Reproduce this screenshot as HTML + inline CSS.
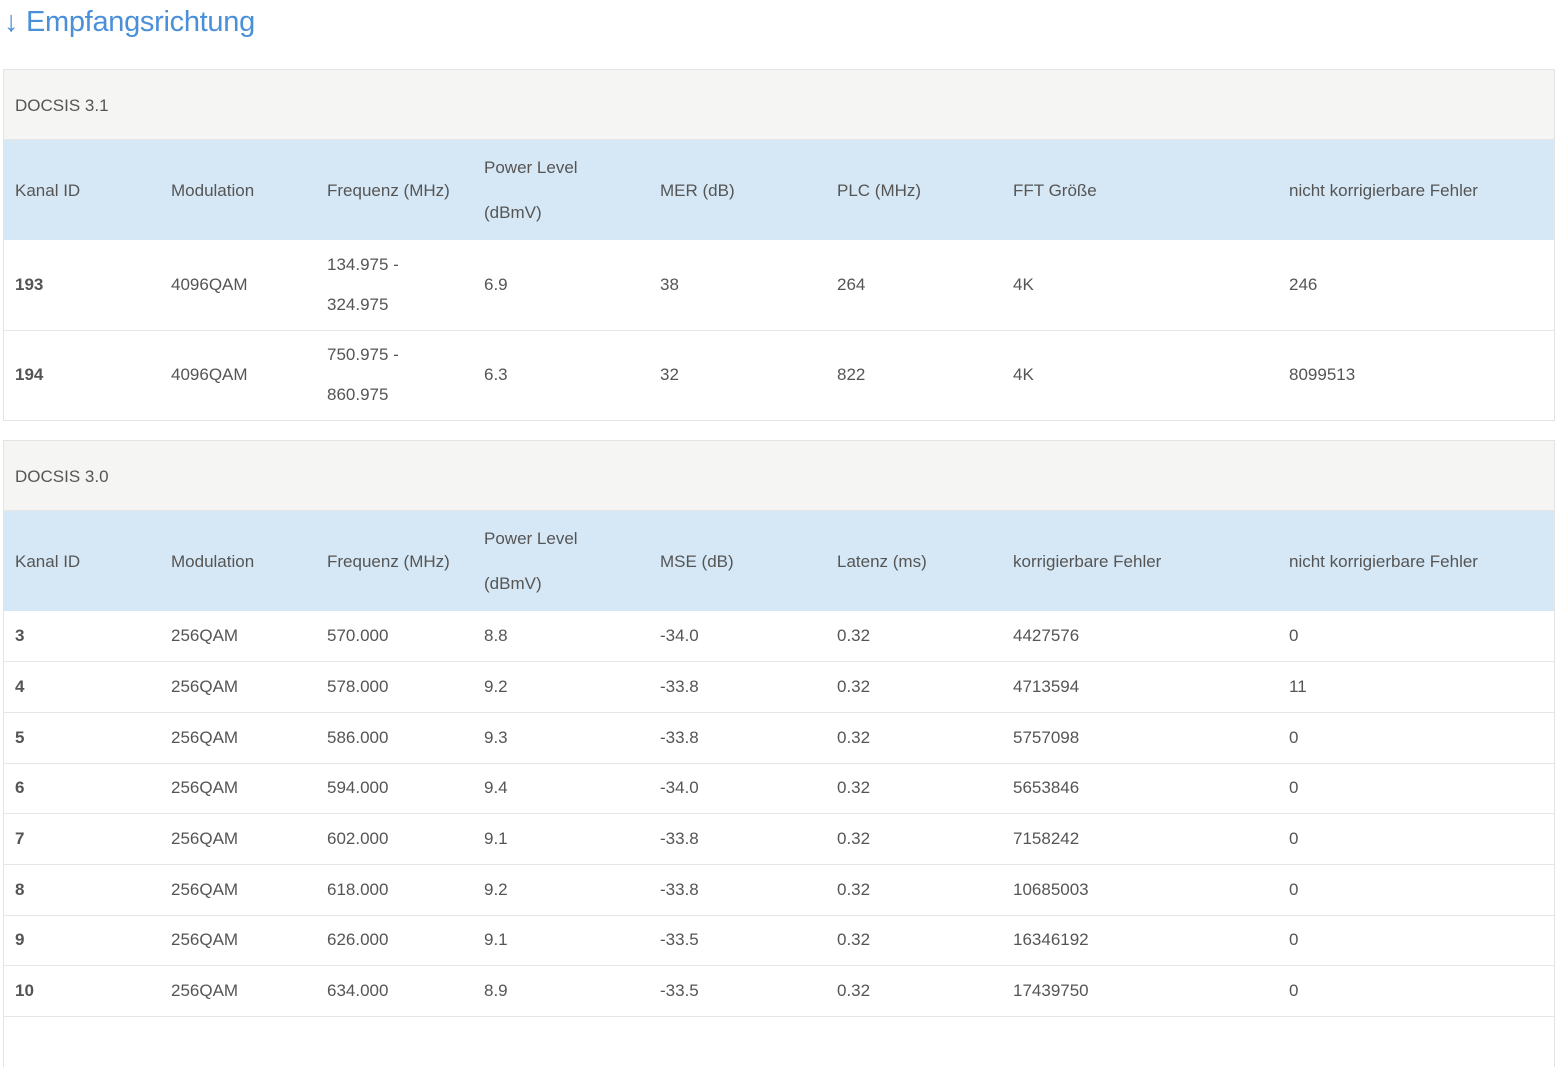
<!DOCTYPE html>
<html><head><meta charset="utf-8"><style>
html,body{margin:0;height:1023px;overflow:hidden}
body{background:#fff;font-family:"Liberation Sans",sans-serif;color:#555;font-size:17px;}
h2{margin:0;position:absolute;left:4px;top:6px;font-weight:normal;font-size:29px;color:#4a90d9;letter-spacing:-0.3px}
.panel{position:absolute;left:3px;width:1550px;border:1px solid #e3e3e3;}
.ph{height:69px;background:#f5f5f4;border-bottom:1px solid #e6e6e6;padding-left:11px;line-height:72px;font-size:17px;color:#555}
table{border-collapse:collapse;table-layout:fixed;width:1550px}
td,th{padding:0 0 0 11px;text-align:left;font-weight:normal;vertical-align:middle;overflow:hidden;white-space:nowrap}
thead tr{background:#d6e8f6}
th{line-height:45px}
.p1 tbody tr{height:90px;border-top:1px solid #e6e6e6}
.p1 thead tr,.p2 thead tr{height:100px}
.p1 td{line-height:40px}
.p2 tbody tr{height:50.7px;border-top:1px solid #e6e6e6}
td:first-child{font-weight:bold}
</style></head><body>
<h2>↓ Empfangsrichtung</h2>
<div class="panel" style="top:69px">
<div class="ph">DOCSIS 3.1</div>
<table class="p1"><colgroup><col style="width:156px"><col style="width:156px"><col style="width:157px"><col style="width:176px"><col style="width:177px"><col style="width:176px"><col style="width:276px"><col></colgroup>
<thead><tr><th>Kanal ID</th><th>Modulation</th><th>Frequenz (MHz)</th><th>Power Level<br>(dBmV)</th><th>MER (dB)</th><th>PLC (MHz)</th><th>FFT Größe</th><th>nicht korrigierbare Fehler</th></tr></thead>
<tbody>
<tr style="border-top:none"><td>193</td><td>4096QAM</td><td>134.975 -<br>324.975</td><td>6.9</td><td>38</td><td>264</td><td>4K</td><td>246</td></tr>
<tr><td>194</td><td>4096QAM</td><td>750.975 -<br>860.975</td><td>6.3</td><td>32</td><td>822</td><td>4K</td><td>8099513</td></tr>
</tbody></table></div>
<div class="panel" style="top:440px;border-bottom:none">
<div class="ph">DOCSIS 3.0</div>
<table class="p2"><colgroup><col style="width:156px"><col style="width:156px"><col style="width:157px"><col style="width:176px"><col style="width:177px"><col style="width:176px"><col style="width:276px"><col></colgroup>
<thead><tr><th>Kanal ID</th><th>Modulation</th><th>Frequenz (MHz)</th><th>Power Level<br>(dBmV)</th><th>MSE (dB)</th><th>Latenz (ms)</th><th>korrigierbare Fehler</th><th>nicht korrigierbare Fehler</th></tr></thead>
<tbody>
<tr style="border-top:none"><td>3</td><td>256QAM</td><td>570.000</td><td>8.8</td><td>-34.0</td><td>0.32</td><td>4427576</td><td>0</td></tr>
<tr><td>4</td><td>256QAM</td><td>578.000</td><td>9.2</td><td>-33.8</td><td>0.32</td><td>4713594</td><td>11</td></tr>
<tr><td>5</td><td>256QAM</td><td>586.000</td><td>9.3</td><td>-33.8</td><td>0.32</td><td>5757098</td><td>0</td></tr>
<tr><td>6</td><td>256QAM</td><td>594.000</td><td>9.4</td><td>-34.0</td><td>0.32</td><td>5653846</td><td>0</td></tr>
<tr><td>7</td><td>256QAM</td><td>602.000</td><td>9.1</td><td>-33.8</td><td>0.32</td><td>7158242</td><td>0</td></tr>
<tr><td>8</td><td>256QAM</td><td>618.000</td><td>9.2</td><td>-33.8</td><td>0.32</td><td>10685003</td><td>0</td></tr>
<tr><td>9</td><td>256QAM</td><td>626.000</td><td>9.1</td><td>-33.5</td><td>0.32</td><td>16346192</td><td>0</td></tr>
<tr><td>10</td><td>256QAM</td><td>634.000</td><td>8.9</td><td>-33.5</td><td>0.32</td><td>17439750</td><td>0</td></tr>
<tr><td></td><td></td><td></td><td></td><td></td><td></td><td></td><td></td></tr>
</tbody></table></div>
</body></html>
